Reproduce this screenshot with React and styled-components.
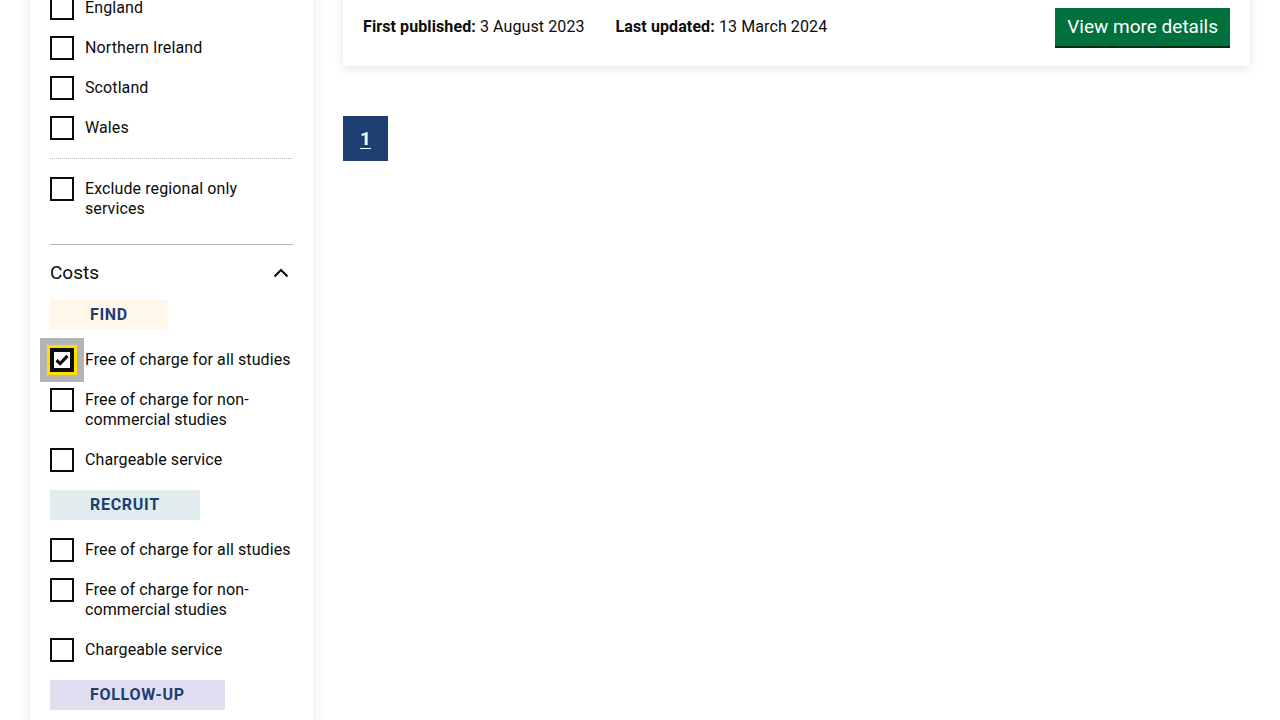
import React, { useState } from "react";
import styled, { createGlobalStyle } from "styled-components";

const GlobalStyle = createGlobalStyle`
  * { box-sizing: border-box; }
  body {
    margin: 0;
    background: #fff;
    font-family: Roboto, "Liberation Sans", Arial, sans-serif;
    color: #0b0c0c;
    overflow: hidden;
  }
`;

const Layout = styled.div`
  display: grid;
  grid-template-columns: 283px 1fr;
  gap: 30px;
  align-items: start;
  padding: 0 30px;
  margin-top: -24px;
`;

const Sidebar = styled.aside`
  background: #fff;
  padding: 20px 20px 40px;
  box-shadow: 0 0 16px rgba(0, 0, 0, 0.09);
`;

const CheckList = styled.div`
  display: flex;
  flex-direction: column;
  gap: 16px;
  margin-top: ${(p) => p.$top || 0}px;
`;

const Item = styled.label`
  position: relative;
  display: flex;
  align-items: flex-start;
  gap: 11px;
  font-size: 16px;
  line-height: 20px;
  letter-spacing: 0.1px;
  cursor: pointer;
`;

const Hover = styled.span`
  position: absolute;
  left: -10px;
  top: -10px;
  width: 44px;
  height: 44px;
  background: #b1b4b6;
`;

const Box = styled.span`
  position: relative;
  flex: none;
  width: 24px;
  height: 24px;
  border: ${(p) => (p.$focus ? "4px" : "2px")} solid #0b0c0c;
  background: #fff;
  box-shadow: ${(p) => (p.$focus ? "0 0 0 3px #ffdd00" : "none")};
  display: flex;
  align-items: center;
  justify-content: center;
`;

const Text = styled.span`
  padding: 2px 0;
`;

const Dotted = styled.hr`
  border: none;
  border-top: 1px dotted #b1b4b6;
  margin: 18px 0 18px;
`;

const Rule = styled.hr`
  border: none;
  border-top: 1px solid #b1b4b6;
  margin: 23px 0 0;
`;

const SectionHead = styled.button`
  display: flex;
  width: 100%;
  align-items: center;
  justify-content: space-between;
  background: none;
  border: none;
  padding: 16px 0 15px;
  font-family: inherit;
  font-size: 19px;
  line-height: 24px;
  color: #0b0c0c;
  cursor: pointer;
`;

const Tag = styled.div`
  display: inline-block;
  align-self: flex-start;
  height: 30px;
  line-height: 30px;
  padding: 0 40px;
  margin-top: ${(p) => p.$top || 0}px;
  background: ${(p) => p.$bg};
  color: #1d3f72;
  font-weight: 700;
  font-size: 16px;
  letter-spacing: 0.7px;
`;

const Group = styled.div`
  display: flex;
  flex-direction: column;
`;

const Main = styled.main`
  display: flex;
  flex-direction: column;
  align-items: flex-start;
`;

const Card = styled.section`
  align-self: stretch;
  background: #fff;
  padding: 32px 20px 20px;
  box-shadow: 0 3px 10px rgba(0, 0, 0, 0.1);
`;

const MetaRow = styled.div`
  display: flex;
  align-items: center;
  justify-content: space-between;
`;

const Dates = styled.p`
  margin: 0;
  display: flex;
  gap: 31px;
  font-size: 16px;
  line-height: 20px;
  letter-spacing: 0.1px;
`;

const Button = styled.button`
  background: #00703c;
  color: #fff;
  border: none;
  box-shadow: 0 2px 0 #002d18;
  padding: 9px 12px 9px;
  font-family: inherit;
  font-size: 19px;
  line-height: 20px;
  cursor: pointer;
`;

const Pager = styled.nav`
  margin-top: 50px;
  display: flex;
`;

const PageLink = styled.a`
  width: 45px;
  height: 45px;
  display: flex;
  align-items: center;
  justify-content: center;
  background: #1d3f72;
  color: #fff;
  font-weight: 700;
  font-size: 19px;
  text-decoration: underline;
  text-underline-offset: 3px;
`;

const Tick = () => (
  <svg width="14" height="12" viewBox="0 0 14 12">
    <path d="M1.5 6.2 L5.2 9.6 L12.5 1.8" fill="none" stroke="#0b0c0c" strokeWidth="3.2" />
  </svg>
);

const Chevron = () => (
  <svg width="16" height="10" viewBox="0 0 16 10" style={{ marginRight: 4 }}>
    <path d="M1.5 8.5 L8 2 L14.5 8.5" fill="none" stroke="#0b0c0c" strokeWidth="2" />
  </svg>
);

const Check = ({ label, checked, focus }) => (
  <Item>
    {focus && <Hover />}
    <Box $focus={focus}>{checked && <Tick />}</Box>
    <Text>{label}</Text>
  </Item>
);

const costOptions = [
  "Free of charge for all studies",
  "Free of charge for non-commercial studies",
  "Chargeable service",
];

const CostGroup = ({ name, bg, top, checkedFirst }) => (
  <Group>
    <Tag $bg={bg} $top={top}>{name}</Tag>
    <CheckList $top={18}>
      {costOptions.map((o, i) => (
        <Check key={o} label={o} checked={checkedFirst && i === 0} focus={checkedFirst && i === 0} />
      ))}
    </CheckList>
  </Group>
);

export default function App() {
  const [open, setOpen] = useState(true);
  return (
    <>
      <GlobalStyle />
      <Layout>
        <Sidebar>
          <CheckList>
            {["England", "Northern Ireland", "Scotland", "Wales"].map((n) => (
              <Check key={n} label={n} />
            ))}
          </CheckList>
          <Dotted />
          <CheckList>
            <Check label="Exclude regional only services" />
          </CheckList>
          <Rule />
          <SectionHead onClick={() => setOpen(!open)}>
            Costs
            <Chevron />
          </SectionHead>
          {open && (
            <>
              <CostGroup name="FIND" bg="#fff7e9" checkedFirst />
              <CostGroup name="RECRUIT" bg="#e0eced" top={18} />
              <CostGroup name="FOLLOW-UP" bg="#e0def0" top={18} />
            </>
          )}
        </Sidebar>
        <Main>
          <Card>
            <MetaRow>
              <Dates>
                <span>
                  <strong>First published:</strong> 3 August 2023
                </span>
                <span>
                  <strong>Last updated:</strong> 13 March 2024
                </span>
              </Dates>
              <Button>View more details</Button>
            </MetaRow>
          </Card>
          <Pager>
            <PageLink href="#">1</PageLink>
          </Pager>
        </Main>
      </Layout>
    </>
  );
}
